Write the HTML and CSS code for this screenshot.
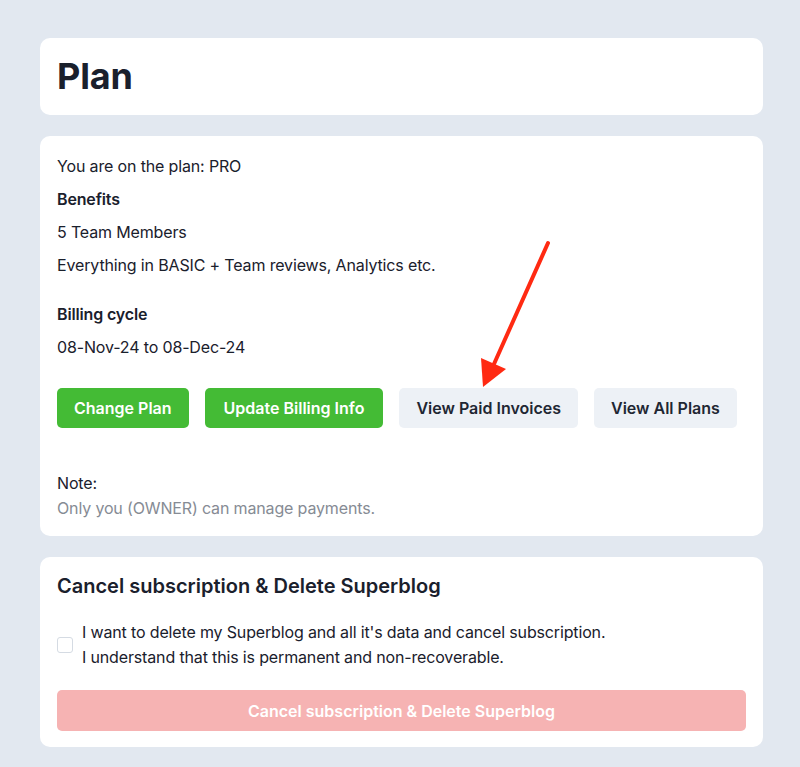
FILE: index.html
```html
<!DOCTYPE html>
<html>
<head>
<meta charset="utf-8">
<link rel="stylesheet" href="styles.css">
</head>
<body>
<div class="page">
  <section class="card card-title">
    <h1 class="title">Plan</h1>
  </section>
  <section class="card card-plan">
    <p class="line">You are on the plan: PRO</p>
    <p class="line strong">Benefits</p>
    <p class="line">5 Team Members</p>
    <p class="line">Everything in BASIC + Team reviews, Analytics etc.</p>
    <p class="line strong billing">Billing cycle</p>
    <p class="line">08-Nov-24 to 08-Dec-24</p>
    <div class="actions">
      <button class="btn btn-green">Change Plan</button>
      <button class="btn btn-green btn-wide">Update Billing Info</button>
      <button class="btn btn-gray">View Paid Invoices</button>
      <button class="btn btn-gray">View All Plans</button>
    </div>
    <div class="note">
      <div class="note-label">Note:</div>
      <div class="note-text">Only you (OWNER) can manage payments.</div>
    </div>
  </section>
  <section class="card card-cancel">
    <h2 class="subtitle">Cancel subscription &amp; Delete Superblog</h2>
    <label class="confirm">
      <span class="checkbox"></span>
      <span class="confirm-text">I want to delete my Superblog and all it's data and cancel subscription.<br>I understand that this is permanent and non-recoverable.</span>
    </label>
    <button class="btn-danger" disabled>Cancel subscription &amp; Delete Superblog</button>
  </section>
</div>
<svg class="arrow" width="800" height="767" viewBox="0 0 800 767">
  <line x1="548" y1="243" x2="494" y2="364" stroke="#ff2a12" stroke-width="4" stroke-linecap="round"/>
  <polygon points="481,358 506,369 483,387" fill="#ff2a12"/>
</svg>
</body>
</html>
```
FILE: styles.css
```css
* { box-sizing: border-box; }
html, body { margin: 0; padding: 0; }
body {
  background: #e2e8f0;
  font-family: Inter, "Noto Sans", sans-serif;
  color: #1a202c;
  width: 800px;
  height: 767px;
  overflow: hidden;
}
.page {
  padding: 38px 37px 0 40px;
  display: flex;
  flex-direction: column;
  gap: 21px;
}
.card {
  background: #fff;
  border-radius: 10px;
  padding: 16px 17px;
}
.card-title { padding: 18px 17px 19px; }
.title {
  margin: 0;
  font-size: 36px;
  line-height: 40px;
  font-weight: 700;
  letter-spacing: -0.2px;
}
.card-plan { padding-top: 18px; }
.line {
  margin: 0 0 9px;
  font-size: 16px;
  line-height: 24px;
  letter-spacing: -0.15px;
}
.strong { font-weight: 600; }
.billing { margin-top: 25px; }
.actions {
  display: flex;
  gap: 16px;
  margin-top: 29px;
}
.btn {
  flex: none;
  white-space: nowrap;
  height: 40px;
  border: 0;
  border-radius: 5px;
  font-family: inherit;
  font-size: 16px;
  font-weight: 600;
  padding: 0 17px;
}
.btn-wide { padding: 0 19px; }
.btn-green { background: #44bb35; color: #fff; }
.btn-gray { background: #edf1f6; color: #1f2733; }
.note {
  margin-top: 43px;
  font-size: 16px;
  line-height: 24px;
  letter-spacing: -0.15px;
}
.note-label { color: #1a202c; height: 25px; }
.note-text { color: #868b94; }
.card-cancel { padding: 15px 17px 16px; }
.subtitle {
  margin: 0;
  font-size: 20px;
  line-height: 28px;
  font-weight: 600;
}
.confirm {
  display: flex;
  align-items: center;
  margin-top: 20px;
  gap: 9px;
}
.checkbox {
  width: 16px;
  height: 16px;
  border: 1px solid #d5dbe3;
  border-radius: 3px;
  flex: none;
  background: #fff;
}
.confirm-text {
  font-size: 16px;
  line-height: 25px;
  letter-spacing: -0.15px;
}
.btn-danger {
  display: block;
  width: 100%;
  height: 41px;
  margin-top: 20px;
  border: 0;
  border-radius: 5px;
  background: #f6b3b3;
  color: #fff;
  font-family: inherit;
  font-size: 16px;
  font-weight: 600;
}
.arrow {
  position: absolute;
  left: 0;
  top: 0;
  pointer-events: none;
}
```
